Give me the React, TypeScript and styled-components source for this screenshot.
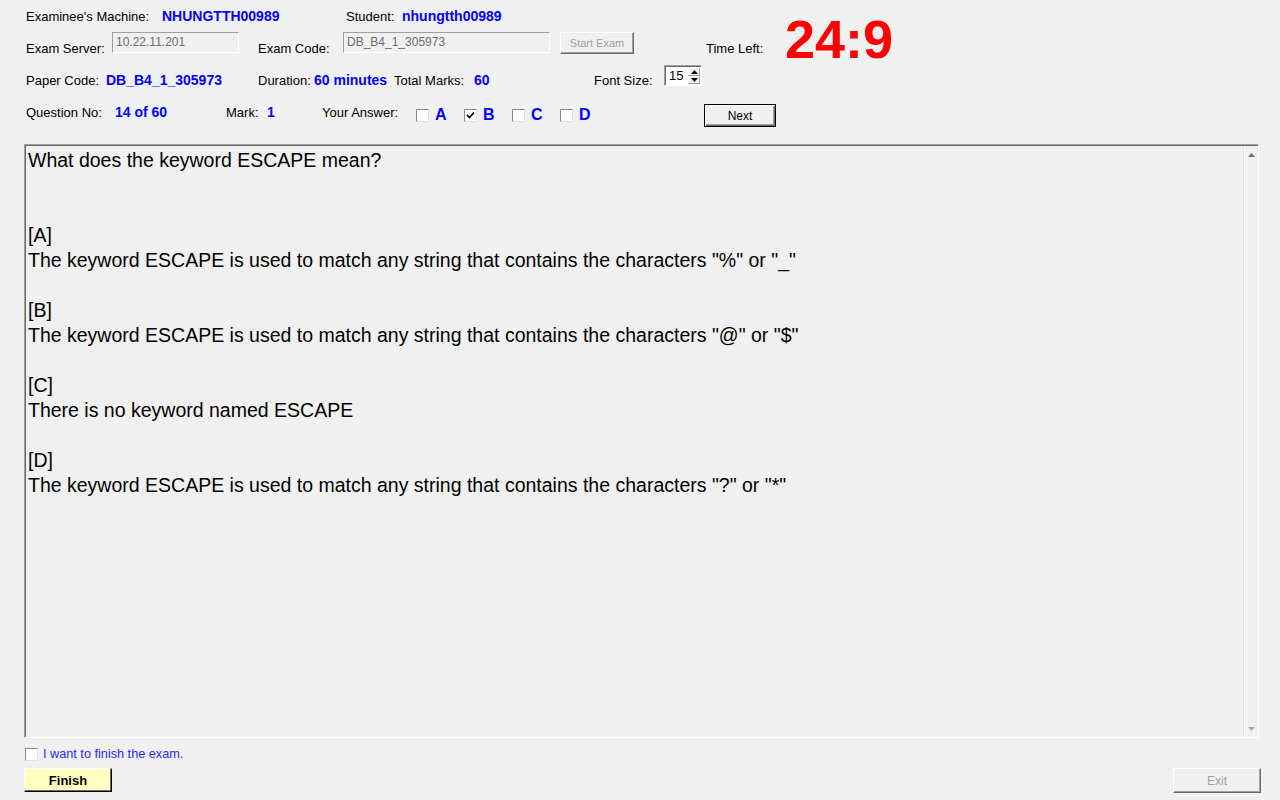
import React from "react";
import styled, { createGlobalStyle, css } from "styled-components";

const GlobalStyle = createGlobalStyle`
  html, body { margin: 0; padding: 0; background: #f0f0f0; }
  body {
    font-family: "Liberation Sans", Arial, sans-serif;
    font-size: 13px;
    color: #000;
  }
`;

const Screen = styled.div`
  width: 1280px;
  height: 800px;
  overflow: hidden;
  display: flex;
  flex-direction: column;
  background: #f0f0f0;
`;

const Header = styled.div`
  display: flex;
  flex-direction: column;
  padding-left: 26px;
`;

const Row = styled.div`
  display: flex;
  height: 32px;
  align-items: center;
`;

const Label = styled.span<{ $w?: number; $ml?: number; $bottom?: boolean }>`
  flex: none;
  width: ${(p) => (p.$w ? `${p.$w}px` : "auto")};
  margin-left: ${(p) => p.$ml ?? 0}px;
  font-size: 13px;
  line-height: 15px;
  white-space: nowrap;
  ${(p) =>
    p.$bottom &&
    css`
      align-self: flex-end;
      margin-bottom: 8px;
    `}
`;

const Value = styled.span<{ $w?: number }>`
  flex: none;
  width: ${(p) => (p.$w ? `${p.$w}px` : "auto")};
  font-size: 14px;
  font-weight: 700;
  line-height: 16px;
  color: #0000ff;
  white-space: nowrap;
`;

const TextField = styled.div<{ $w: number }>`
  flex: none;
  align-self: flex-start;
  box-sizing: border-box;
  width: ${(p) => p.$w}px;
  height: 21px;
  padding: 0 3px;
  border: 1px solid;
  border-color: #a0a0a0 #ffffff #ffffff #a0a0a0;
  background: #f0f0f0;
  color: #6d6d6d;
  font-size: 12px;
  line-height: 19px;
  white-space: nowrap;
  overflow: hidden;
`;

type Kind = "disabled" | "default" | "finish";

const WinButton = styled.button<{ $w: number; $h: number; $kind: Kind; $ml?: number; $mt?: number }>`
  flex: none;
  box-sizing: border-box;
  width: ${(p) => p.$w}px;
  height: ${(p) => p.$h}px;
  margin: ${(p) => p.$mt ?? 0}px 0 0 ${(p) => p.$ml ?? 0}px;
  padding: 0;
  align-self: flex-start;
  font-family: "Liberation Sans", Arial, sans-serif;
  border: 1px solid;
  cursor: default;
  ${(p) =>
    p.$kind === "disabled" &&
    css`
      background: #f0f0f0;
      color: #a0a0a0;
      font-size: 12px;
      border-color: #ffffff #696969 #696969 #ffffff;
      box-shadow: inset -1px -1px 0 #a0a0a0;
    `}
  ${(p) =>
    p.$kind === "default" &&
    css`
      background: #f0f0f0;
      color: #000;
      font-size: 12px;
      border-color: #000;
      box-shadow: inset 1px 1px 0 #ffffff, inset -1px -1px 0 #696969, inset -2px -2px 0 #a0a0a0;
    `}
  ${(p) =>
    p.$kind === "finish" &&
    css`
      background: #ffffc0;
      color: #000;
      font-size: 13px;
      font-weight: 700;
      border-color: #ffffff #000 #000 #ffffff;
      box-shadow: inset -1px -1px 0 #696969;
    `}
`;

const SmallText = styled.span`
  font-size: 11px;
`;

const Timer = styled.span`
  flex: none;
  align-self: flex-start;
  margin-top: -20px;
  font-size: 54px;
  line-height: 54px;
  font-weight: 700;
  color: #ff0000;
  white-space: nowrap;
`;

const Spinner = styled.div`
  flex: none;
  align-self: flex-start;
  margin-top: 1px;
  display: flex;
  box-sizing: border-box;
  width: 38px;
  height: 21px;
  background: #ffffff;
  border: 1px solid;
  border-color: #a0a0a0 #ffffff #ffffff #a0a0a0;
  box-shadow: inset 1px 1px 0 #696969;
`;

const SpinValue = styled.span`
  flex: 1;
  padding: 1px 0 0 4px;
  font-size: 13px;
  line-height: 18px;
`;

const SpinButtons = styled.div`
  display: flex;
  flex-direction: column;
  width: 12px;
  margin: 2px 1px 1px 0;
`;

const SpinButton = styled.div`
  flex: 1;
  box-sizing: border-box;
  background: #f0f0f0;
  border: 1px solid;
  border-color: #ffffff #a0a0a0 #a0a0a0 #ffffff;
  display: flex;
  align-items: center;
  justify-content: center;
`;

const Choice = styled.div`
  flex: none;
  width: 48px;
  display: flex;
  align-items: center;
  gap: 6px;
  margin-top: 6px;
`;

const Box = styled.span`
  flex: none;
  box-sizing: border-box;
  width: 13px;
  height: 13px;
  background: #ffffff;
  border: 1px solid;
  border-color: #8a8a8a #e3e3e3 #e3e3e3 #8a8a8a;
  display: flex;
  align-items: center;
  justify-content: center;
`;

const ChoiceLetter = styled.span`
  font-size: 16px;
  font-weight: 700;
  line-height: 18px;
  color: #0000ff;
`;

const QuestionPanel = styled.div`
  display: flex;
  box-sizing: border-box;
  margin: 16px 21px 0 24px;
  height: 594px;
  padding: 1px 0 0 1px;
  border: 1px solid;
  border-color: #a0a0a0 #ffffff #ffffff #a0a0a0;
  box-shadow: inset 1px 1px 0 #696969;
`;

const QuestionText = styled.div`
  flex: 1;
  padding: 2px 0 0 2px;
  font-size: 19.5px;
  line-height: 25px;
  white-space: pre-wrap;
  color: #000;
`;

const ScrollBar = styled.div`
  flex: none;
  width: 14px;
  display: flex;
  flex-direction: column;
  justify-content: space-between;
  border-left: 1px solid #e2e2e2;
  box-shadow: inset 1px 0 0 #fafafa;
  background: #f0f0f0;
`;

const ScrollArrow = styled.div`
  height: 17px;
  display: flex;
  align-items: center;
  justify-content: center;
`;

const FinishRow = styled.div`
  display: flex;
  align-items: center;
  gap: 5px;
  height: 13px;
  margin: 10px 0 0 25px;
`;

const FinishLabel = styled.span`
  font-size: 12.7px;
  line-height: 15px;
  color: #2a2aff;
`;

const ButtonRow = styled.div`
  display: flex;
  justify-content: space-between;
  margin-top: 7px;
  padding: 0 19px 0 24px;
`;

const Check = () => (
  <svg width="9" height="9" viewBox="0 0 9 9">
    <polyline points="1,4 3.5,6.5 8,1.5" fill="none" stroke="#000" strokeWidth="1.7" />
  </svg>
);

const Tri = ({ up, color }: { up: boolean; color: string }) => (
  <svg width="7" height="4" viewBox="0 0 7 4">
    <polygon points={up ? "3.5,0 7,4 0,4" : "0,0 7,0 3.5,4"} fill={color} />
  </svg>
);

const question =
  'What does the keyword ESCAPE mean?\n\n\n[A]\nThe keyword ESCAPE is used to match any string that contains the characters "%" or "_"\n\n[B]\nThe keyword ESCAPE is used to match any string that contains the characters "@" or "$"\n\n[C]\nThere is no keyword named ESCAPE\n\n[D]\nThe keyword ESCAPE is used to match any string that contains the characters "?" or "*"';

const answers = [
  { letter: "A", checked: false },
  { letter: "B", checked: true },
  { letter: "C", checked: false },
  { letter: "D", checked: false },
];

export default function App() {
  return (
    <>
      <GlobalStyle />
      <Screen>
        <Header>
          <Row>
            <Label $w={136}>Examinee's Machine:</Label>
            <Value $w={184}>NHUNGTTH00989</Value>
            <Label $w={56}>Student:</Label>
            <Value>nhungtth00989</Value>
          </Row>
          <Row>
            <Label $w={86} $bottom>
              Exam Server:
            </Label>
            <TextField $w={127}>10.22.11.201</TextField>
            <Label $w={85} $ml={19} $bottom>
              Exam Code:
            </Label>
            <TextField $w={207}>DB_B4_1_305973</TextField>
            <WinButton $w={74} $h={22} $kind="disabled" $ml={10}>
              <SmallText>Start Exam</SmallText>
            </WinButton>
            <Label $w={79} $ml={72} $bottom>
              Time Left:
            </Label>
            <Timer>24:9</Timer>
          </Row>
          <Row>
            <Label $w={80}>Paper Code:</Label>
            <Value $w={152}>DB_B4_1_305973</Value>
            <Label $w={56}>Duration:</Label>
            <Value $w={80}>60 minutes</Value>
            <Label $w={80}>Total Marks:</Label>
            <Value $w={120}>60</Value>
            <Label $w={70}>Font Size:</Label>
            <Spinner>
              <SpinValue>15</SpinValue>
              <SpinButtons>
                <SpinButton>
                  <Tri up color="#000" />
                </SpinButton>
                <SpinButton>
                  <Tri up={false} color="#000" />
                </SpinButton>
              </SpinButtons>
            </Spinner>
          </Row>
          <Row>
            <Label $w={89}>Question No:</Label>
            <Value $w={111}>14 of 60</Value>
            <Label $w={41}>Mark:</Label>
            <Value $w={55}>1</Value>
            <Label $w={94}>Your Answer:</Label>
            {answers.map((a) => (
              <Choice key={a.letter}>
                <Box>{a.checked && <Check />}</Box>
                <ChoiceLetter>{a.letter}</ChoiceLetter>
              </Choice>
            ))}
            <WinButton $w={72} $h={23} $kind="default" $ml={96} $mt={8}>
              Next
            </WinButton>
          </Row>
        </Header>

        <QuestionPanel>
          <QuestionText>{question}</QuestionText>
          <ScrollBar>
            <ScrollArrow>
              <Tri up color="#707070" />
            </ScrollArrow>
            <ScrollArrow>
              <Tri up={false} color="#a8a8a8" />
            </ScrollArrow>
          </ScrollBar>
        </QuestionPanel>

        <FinishRow>
          <Box />
          <FinishLabel>I want to finish the exam.</FinishLabel>
        </FinishRow>
        <ButtonRow>
          <WinButton $w={88} $h={24} $kind="finish">
            Finish
          </WinButton>
          <WinButton $w={88} $h={25} $kind="disabled">
            Exit
          </WinButton>
        </ButtonRow>
      </Screen>
    </>
  );
}
